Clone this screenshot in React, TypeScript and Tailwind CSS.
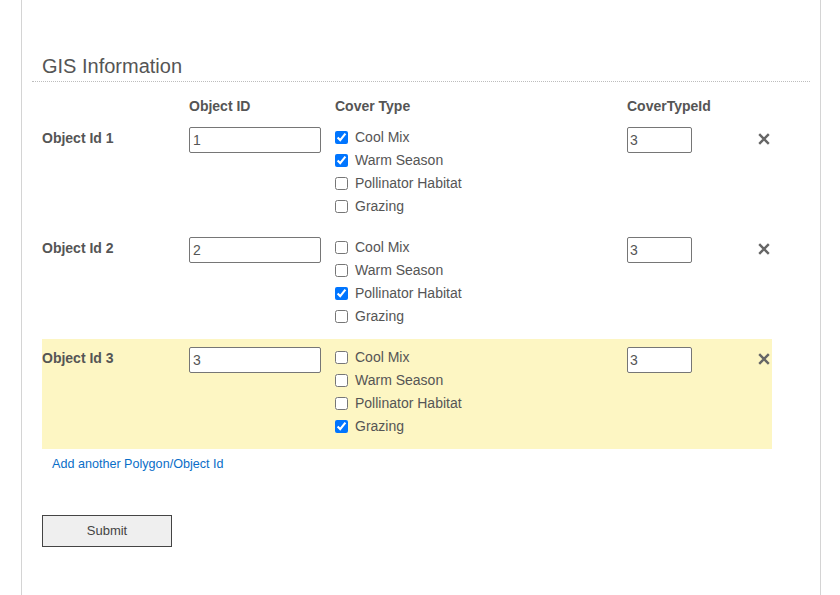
import React from "react";

type Row = { label: string; id: string; checks: boolean[]; typeId: string; highlight?: boolean };

const OPTIONS = ["Cool Mix", "Warm Season", "Pollinator Habitat", "Grazing"];

const ROWS: Row[] = [
  { label: "Object Id 1", id: "1", checks: [true, true, false, false], typeId: "3" },
  { label: "Object Id 2", id: "2", checks: [false, false, true, false], typeId: "3" },
  { label: "Object Id 3", id: "3", checks: [false, false, false, true], typeId: "3", highlight: true },
];

function XIcon() {
  return (
    <svg width="12" height="12" viewBox="0 0 12 12" className="block">
      <path d="M1.2 1.2 L10.8 10.8 M10.8 1.2 L1.2 10.8" stroke="#666" strokeWidth="2.4" strokeLinecap="butt" />
    </svg>
  );
}

export default function App() {
  return (
    <div className="w-[840px] min-h-[595px] bg-white font-['Liberation_Sans',Arial,sans-serif] text-[#555]">
      <div className="ml-[21px] w-[800px] min-h-[595px] border-x border-[#d4d4d4]">
        <div className="px-[20px] pt-[55px]">
          <h2 className="text-[20px] leading-[23px] font-normal text-[#555]">GIS Information</h2>
        </div>
        <div className="mx-[10px] mt-[3px] border-t border-dotted border-[#bdbdbd]" />
        <div className="px-[20px]">
          <div className="mt-[16px] mb-[5px] grid w-[730px] grid-cols-[147px_146px_292px_131px_1fr] text-[14px] font-bold leading-[16px]">
            <div />
            <div>Object ID</div>
            <div>Cover Type</div>
            <div>CoverTypeId</div>
            <div />
          </div>
          {ROWS.map((r) => (
            <div
              key={r.label}
              className={`grid w-[730px] grid-cols-[147px_146px_292px_131px_1fr] pt-[8px] pb-[10px] ${r.highlight ? "bg-[#fdf6c3]" : ""}`}
            >
              <div className="pt-[1px] text-[14px] font-bold leading-[20px]">{r.label}</div>
              <div>
                <input
                  type="text"
                  defaultValue={r.id}
                  className="block h-[26px] w-[132px] rounded-[2px] border border-[#767676] bg-white px-[3px] text-[14px] text-[#555] outline-none"
                />
              </div>
              <div className="mt-[-1.5px] mb-[1.5px] flex flex-col">
                {OPTIONS.map((o, i) => (
                  <label key={o} className="flex h-[23px] items-center text-[14px] leading-[16px]">
                    <input type="checkbox" defaultChecked={r.checks[i]} className="m-0 h-[13px] w-[13px]" />
                    <span className="ml-[7px]">{o}</span>
                  </label>
                ))}
              </div>
              <div>
                <input
                  type="text"
                  defaultValue={r.typeId}
                  className="block h-[26px] w-[65px] rounded-[2px] border border-[#767676] bg-white px-[2px] text-[14px] text-[#555] outline-none"
                />
              </div>
              <div className="pt-[6px]">
                <XIcon />
              </div>
            </div>
          ))}
          <div className="mt-[8px] pl-[10px] text-[12.6px] leading-[15px]">
            <a href="#" className="text-[#0a6ec8]">
              Add another Polygon/Object Id
            </a>
          </div>
          <button className="mt-[43px] block h-[32px] w-[130px] border border-[#444] bg-[#efefef] text-[13px] text-[#444]">
            Submit
          </button>
        </div>
      </div>
    </div>
  );
}
